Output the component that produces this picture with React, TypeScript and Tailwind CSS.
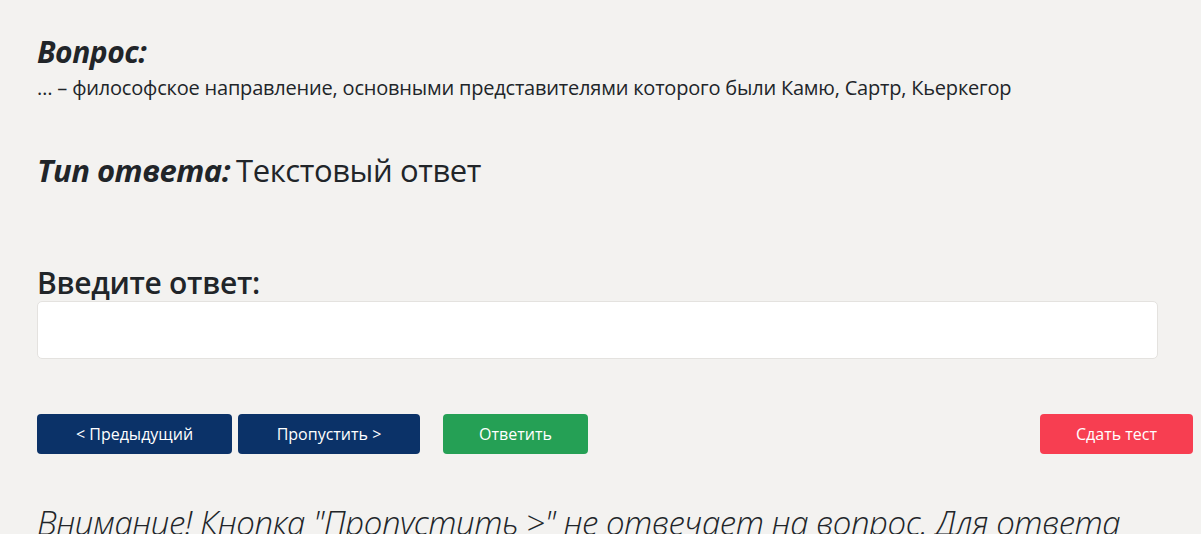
export default function App() {
  return (
    <div
      className="w-[1201px] h-[534px] overflow-hidden bg-[#f3f2f0] text-[#212529]"
      style={{ fontFamily: '"Open Sans", "Noto Sans", sans-serif' }}
    >
      <div className="pl-[37px] pr-[8px] pt-[34px]">
        <div className="text-[30px] font-bold italic leading-[36px] tracking-[-0.5px]">Вопрос:</div>
        <div className="mt-[4px] text-[20px] leading-[28px] tracking-[-0.2px]">
          … – философское направление, основными представителями которого были Камю, Сартр, Кьеркегор
        </div>

        <div className="mt-[48px] flex items-baseline gap-[6px] leading-[40px]">
          <span className="text-[31px] font-bold italic tracking-[-0.5px]">Тип ответа:</span>
          <span className="text-[31px] tracking-[-0.4px]">Текстовый ответ</span>
        </div>

        <div className="mt-[75px] text-[30px] font-semibold leading-[36px] tracking-[-0.3px]">Введите ответ:</div>
        <div className="w-[1121px] h-[58px] bg-white rounded-[5px] border border-[#e4e2df]" />

        <div className="mt-[55px] flex items-center text-[16px] text-white">
          <button className="w-[195px] h-[40px] rounded-[4px] bg-[#0b3268]">&lt; Предыдущий</button>
          <button className="ml-[6px] w-[182px] h-[40px] rounded-[4px] bg-[#0b3268]">Пропустить &gt;</button>
          <button className="ml-[23px] w-[145px] h-[40px] rounded-[4px] bg-[#25a055]">Ответить</button>
          <button className="ml-auto w-[153px] h-[40px] rounded-[4px] bg-[#f73e51]">Сдать тест</button>
        </div>

        <div className="mt-[46px] w-[1140px] text-[33px] font-light italic leading-[46px] tracking-[-0.45px]">
          Внимание! Кнопка "Пропустить &gt;" не отвечает на вопрос. Для ответа нажмите кнопку "Ответить"
        </div>
      </div>
    </div>
  );
}
